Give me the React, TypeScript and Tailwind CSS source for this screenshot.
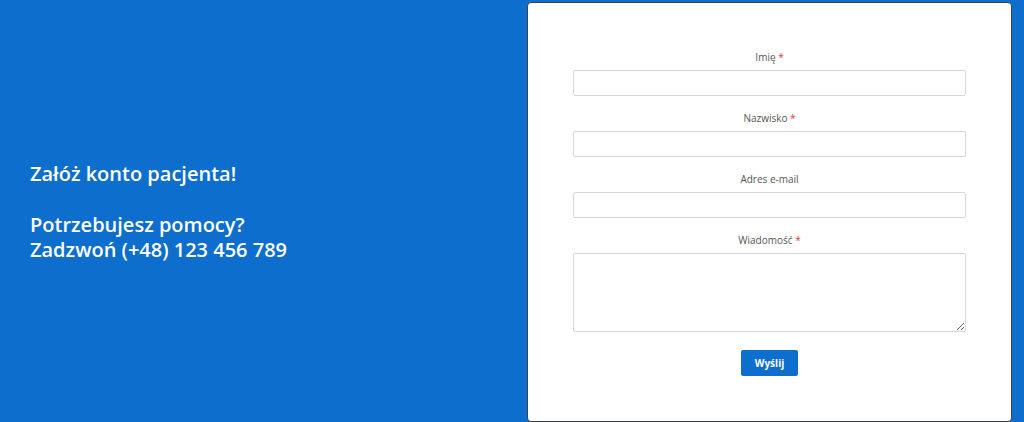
import React from "react";

const fields = [
  { label: "Imię", required: true },
  { label: "Nazwisko", required: true },
  { label: "Adres e-mail", required: false },
];

function Label({ text, required }: { text: string; required: boolean }) {
  return (
    <label className="block text-center text-[10px] leading-[14px] text-[#555] mb-[6px]">
      {text}
      {required && <span className="text-[#d9363e]"> *</span>}
    </label>
  );
}

export default function App() {
  return (
    <div
      className="w-full h-[422px] flex bg-[#0d6ecd] overflow-hidden"
      style={{ fontFamily: '"Open Sans", "Noto Sans", sans-serif' }}
    >
      <div className="w-[527px] shrink-0 flex items-center pl-[30px]">
        <div className="text-white text-[20px] leading-[25px] font-semibold">
          <p className="mb-[26px]">Załóż konto pacjenta!</p>
          <p>Potrzebujesz pomocy?</p>
          <p>Zadzwoń (+48) 123 456 789</p>
        </div>
      </div>

      <div className="flex-1 pt-[2px] pr-[12px]">
        <div className="h-[420px] bg-white border border-[#3a3f45] rounded-[4px] pt-[47px] flex flex-col items-center">
          {fields.map((f) => (
            <div key={f.label} className="mb-[15px]">
              <Label text={f.label} required={f.required} />
              <input
                type="text"
                className="block w-[393px] h-[26px] border border-[#d6d6d6] rounded-[2px] bg-white"
              />
            </div>
          ))}
          <div>
            <Label text="Wiadomość" required={true} />
            <textarea className="block w-[393px] h-[79px] border border-[#d6d6d6] rounded-[2px] bg-white" />
          </div>
          <button className="mt-[18px] w-[57px] h-[26px] bg-[#0d6ecd] text-white text-[10px] font-bold rounded-[2px]">
            Wyślij
          </button>
        </div>
      </div>
    </div>
  );
}
